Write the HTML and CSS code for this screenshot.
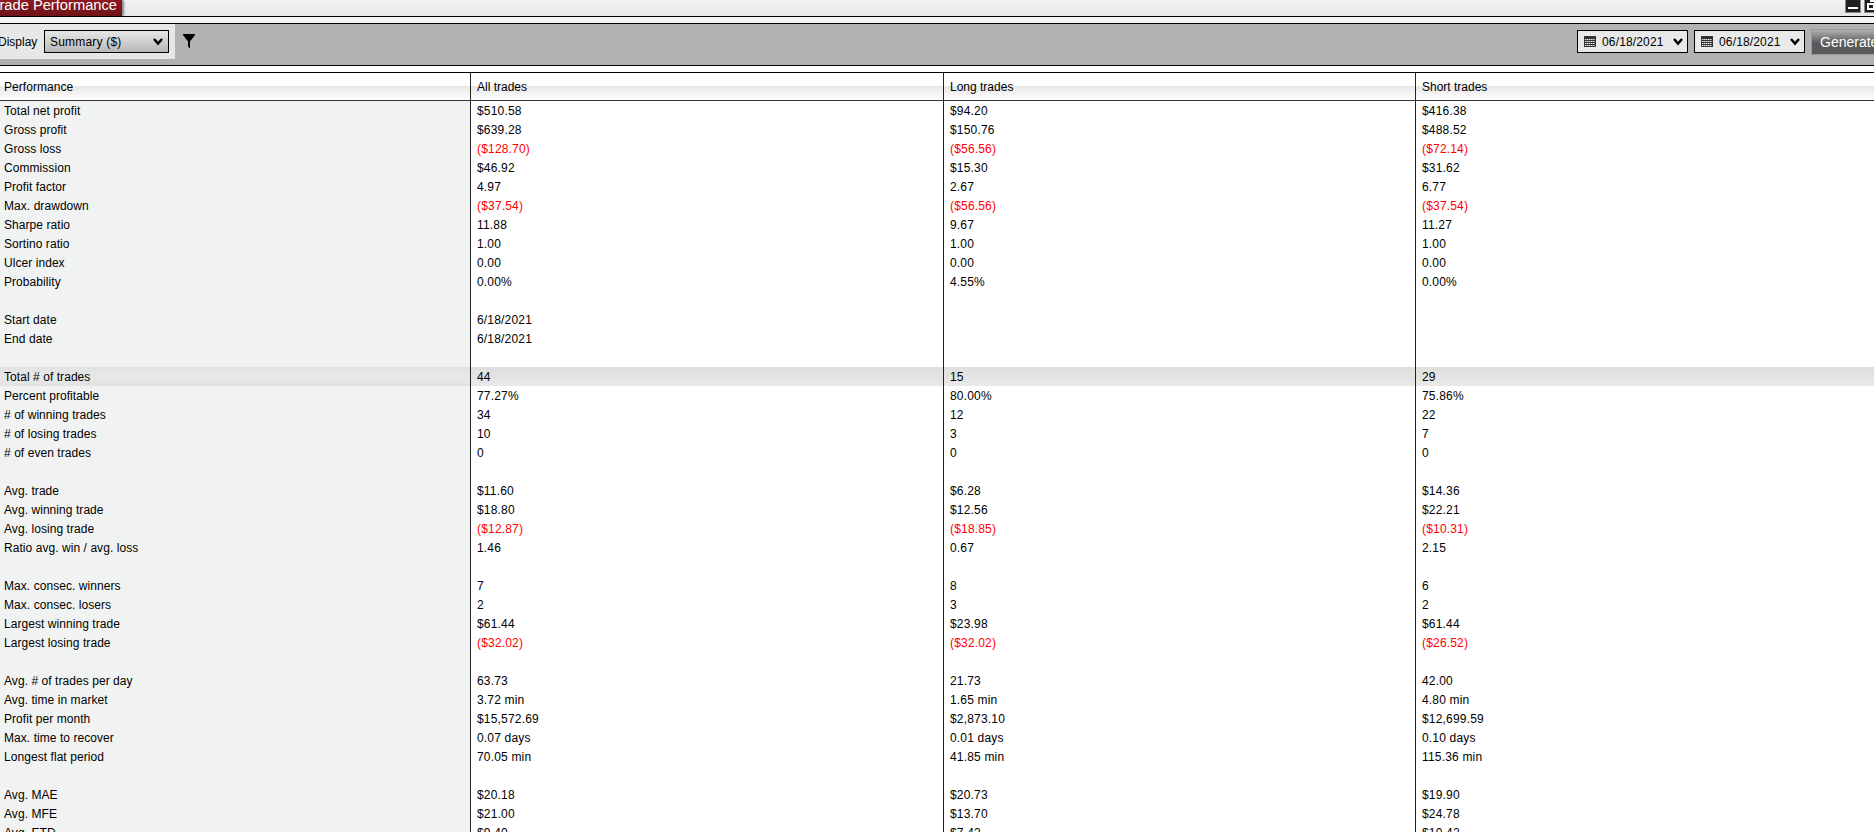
FILE: index.html
```
<!DOCTYPE html>
<html lang="en">
<head>
    <meta charset="utf-8">
    <title>Trade Performance</title>
    <link rel="stylesheet" href="styles.css">
</head>
<body>
    <div class="titlebar">
        <div class="tab"><span>Trade Performance</span></div>
        <div class="window-buttons">
            <svg width="16" height="14" viewBox="0 0 16 14">
                <path d="M0 0h16v13H0z" fill="#8a8a8a"/>
                <path d="M1 0h14v12H1z" fill="#231f20"/>
                <path d="M3 7h10v2H3z" fill="#fff"/>
            </svg>
            <svg width="16" height="14" viewBox="0 0 16 14">
                <path d="M0 0h16v13H0z" fill="#8a8a8a"/>
                <path d="M1 0h15v12H1z" fill="#231f20"/>
                <path d="M3 3h8v7H3zM6 0h7v2H6z" fill="#fff"/>
                <path d="M5 5h4v3H5z" fill="#231f20"/>
            </svg>
        </div>
    </div>
    <div class="strip"></div>

    <div class="toolbar">
        <div class="display">
            <label>Display</label>
            <div class="select">
                <span>Summary ($)</span>
                <svg width="10" height="8" viewBox="0 0 10 8"><path d="M1 1L5 5.500L9 1" fill="none" stroke="#000" stroke-width="2.500"/></svg>
            </div>
        </div>
        <svg class="filter" width="12" height="15" viewBox="0 0 12 15"><path d="M0 0h12v1L7 7.5V14.5L5 12.500V7.500L0 1z"/></svg>
        <div class="actions">
            <div class="date">
                <svg width="12" height="11" viewBox="0 0 12 11">
                    <path d="M0 0h12v11H0z" fill="#333"/>
                    <path d="M1 3.500h10M1 5.500h10M1 7.500h10M1 9.500h10" stroke="#e8eae9" stroke-dasharray="1.500 .5"/>
                </svg>
                <span>06/18/2021</span>
                <svg width="10" height="8" viewBox="0 0 10 8"><path d="M1 1L5 5.500L9 1" fill="none" stroke="#000" stroke-width="2.500"/></svg>
            </div>
            <div class="date">
                <svg width="12" height="11" viewBox="0 0 12 11">
                    <path d="M0 0h12v11H0z" fill="#333"/>
                    <path d="M1 3.500h10M1 5.500h10M1 7.500h10M1 9.500h10" stroke="#e8eae9" stroke-dasharray="1.500 .5"/>
                </svg>
                <span>06/18/2021</span>
                <svg width="10" height="8" viewBox="0 0 10 8"><path d="M1 1L5 5.500L9 1" fill="none" stroke="#000" stroke-width="2.500"/></svg>
            </div>
            <div class="generate">Generate</div>
        </div>
    </div>
    <div class="gap"></div>

    <div class="table" id="table">
        <div class="row head"><div>Performance</div><div>All trades</div><div>Long trades</div><div>Short trades</div></div>
    </div>

    <script>
        var rows = [
            ['Total net profit', '$510.58', '$94.20', '$416.38'],
            ['Gross profit', '$639.28', '$150.76', '$488.52'],
            ['Gross loss', '($128.70)', '($56.56)', '($72.14)'],
            ['Commission', '$46.92', '$15.30', '$31.62'],
            ['Profit factor', '4.97', '2.67', '6.77'],
            ['Max. drawdown', '($37.54)', '($56.56)', '($37.54)'],
            ['Sharpe ratio', '11.88', '9.67', '11.27'],
            ['Sortino ratio', '1.00', '1.00', '1.00'],
            ['Ulcer index', '0.00', '0.00', '0.00'],
            ['Probability', '0.00%', '4.55%', '0.00%'],
            [],
            ['Start date', '6/18/2021', '', ''],
            ['End date', '6/18/2021', '', ''],
            [],
            ['Total # of trades', '44', '15', '29'],
            ['Percent profitable', '77.27%', '80.00%', '75.86%'],
            ['# of winning trades', '34', '12', '22'],
            ['# of losing trades', '10', '3', '7'],
            ['# of even trades', '0', '0', '0'],
            [],
            ['Avg. trade', '$11.60', '$6.28', '$14.36'],
            ['Avg. winning trade', '$18.80', '$12.56', '$22.21'],
            ['Avg. losing trade', '($12.87)', '($18.85)', '($10.31)'],
            ['Ratio avg. win / avg. loss', '1.46', '0.67', '2.15'],
            [],
            ['Max. consec. winners', '7', '8', '6'],
            ['Max. consec. losers', '2', '3', '2'],
            ['Largest winning trade', '$61.44', '$23.98', '$61.44'],
            ['Largest losing trade', '($32.02)', '($32.02)', '($26.52)'],
            [],
            ['Avg. # of trades per day', '63.73', '21.73', '42.00'],
            ['Avg. time in market', '3.72 min', '1.65 min', '4.80 min'],
            ['Profit per month', '$15,572.69', '$2,873.10', '$12,699.59'],
            ['Max. time to recover', '0.07 days', '0.01 days', '0.10 days'],
            ['Longest flat period', '70.05 min', '41.85 min', '115.36 min'],
            [],
            ['Avg. MAE', '$20.18', '$20.73', '$19.90'],
            ['Avg. MFE', '$21.00', '$13.70', '$24.78'],
            ['Avg. ETD', '$9.40', '$7.42', '$10.42']
        ];
        var table = document.getElementById('table');

        rows.forEach(function (data) {
            var row = document.createElement('div');
            row.className = 'row';
            if (data[0] === 'Total # of trades') row.className += ' selected';
            for (var i = 0; i < 4; i++) {
                var cell = document.createElement('div');
                cell.textContent = data[i] || '';
                // losses are shown in brackets
                if (cell.textContent.charAt(0) === '(') cell.className = 'negative';
                row.appendChild(cell);
            }
            table.appendChild(row);
        });
    </script>
</body>
</html>
```
FILE: styles.css
```
* {
    box-sizing: border-box;
}

body {
    margin: 0;
    height: 832px;
    overflow: hidden;
    background-color: #fff;
    color: #000;
    font-family: "Liberation Sans", Arial, sans-serif;
    font-size: 12px;
}

svg {
    display: block;
}

.titlebar {
    display: flex;
    justify-content: space-between;
    height: 17px;
    overflow: hidden;
    border-bottom: 1px solid #000;
    background: linear-gradient(#f1f2f2, #e6e7e8);
}

.tab {
    width: 122px;
    height: 16px;
    background: linear-gradient(#8c1a20, #6e141a);
    box-shadow: 2px 0 2px #888;
    color: #fff;
    font-size: 14.7px;
    line-height: 11px;
    white-space: nowrap;
}

.tab span {
    margin-left: -9px;
}

.window-buttons {
    display: flex;
    gap: 3px;
    margin-right: -6px;
}

.strip {
    height: 7px;
    border-bottom: 1px solid #000;
    background-color: #f1f3f2;
}

.toolbar {
    display: flex;
    height: 42px;
    border-bottom: 1px solid #000;
    background-color: #b2b2b2;
    overflow: hidden;
}

.display {
    display: flex;
    width: 175px;
    height: 35px;
    padding-top: 6px;
    background-color: #e6e7e7;
}

.display label {
    width: 44px;
    margin-left: -2px;
    line-height: 24px;
}

.select {
    display: flex;
    align-items: center;
    justify-content: space-between;
    width: 125px;
    height: 23px;
    margin-left: 2px;
    padding: 0 5px;
    border: 1px solid #000;
    background: linear-gradient(#e6e7e7, #b8b8b8);
}

.select span {
    letter-spacing: 0.2px;
}

.filter {
    margin: 10px 0 0 8px;
}

.actions {
    display: flex;
    gap: 6px;
    margin: 6px 0 0 auto;
}

.date {
    display: flex;
    align-items: center;
    width: 111px;
    height: 23px;
    padding: 0 4px 0 6px;
    border: 1px solid #000;
    background-color: #e8eae9;
}

.date span {
    margin: 0 auto 0 6px;
    letter-spacing: 0.15px;
}

.generate {
    width: 63px;
    height: 26px;
    margin-top: -1px;
    padding-left: 8px;
    border: 1px solid #999;
    border-right: none;
    background: linear-gradient(#b0b0b0, #58595b 55%, #58595b);
    color: #fff;
    font-size: 14px;
    line-height: 24px;
}

.gap {
    height: 7px;
    border-bottom: 1px solid #000;
}

.row {
    display: grid;
    grid-template-columns: 470px 473px 472px 1fr;
    grid-template-rows: 100%;
    height: 19px;
    line-height: 21px;
    letter-spacing: 0.18px;
    white-space: nowrap;
}

.row div {
    padding-left: 6px;
    border-left: 1px solid #222;
}

.row div:first-child {
    padding-left: 4px;
    border-left: none;
    background-color: #f1f3f2;
    letter-spacing: 0.06px;
}

.row .negative {
    color: #f00;
}

.head {
    height: 28px;
    border-bottom: 1px solid #333;
    background: linear-gradient(#fff 13px, #e6e6e6 13px, #fff);
    line-height: 28px;
    letter-spacing: 0;
}

.head div:first-child {
    background: none;
}

.selected {
    background: linear-gradient(#dededd, #e9e9e9);
}

.selected div:first-child {
    background: linear-gradient(#e1e3e2, #e7e9e8 50%, #e1e3e2);
}
```
